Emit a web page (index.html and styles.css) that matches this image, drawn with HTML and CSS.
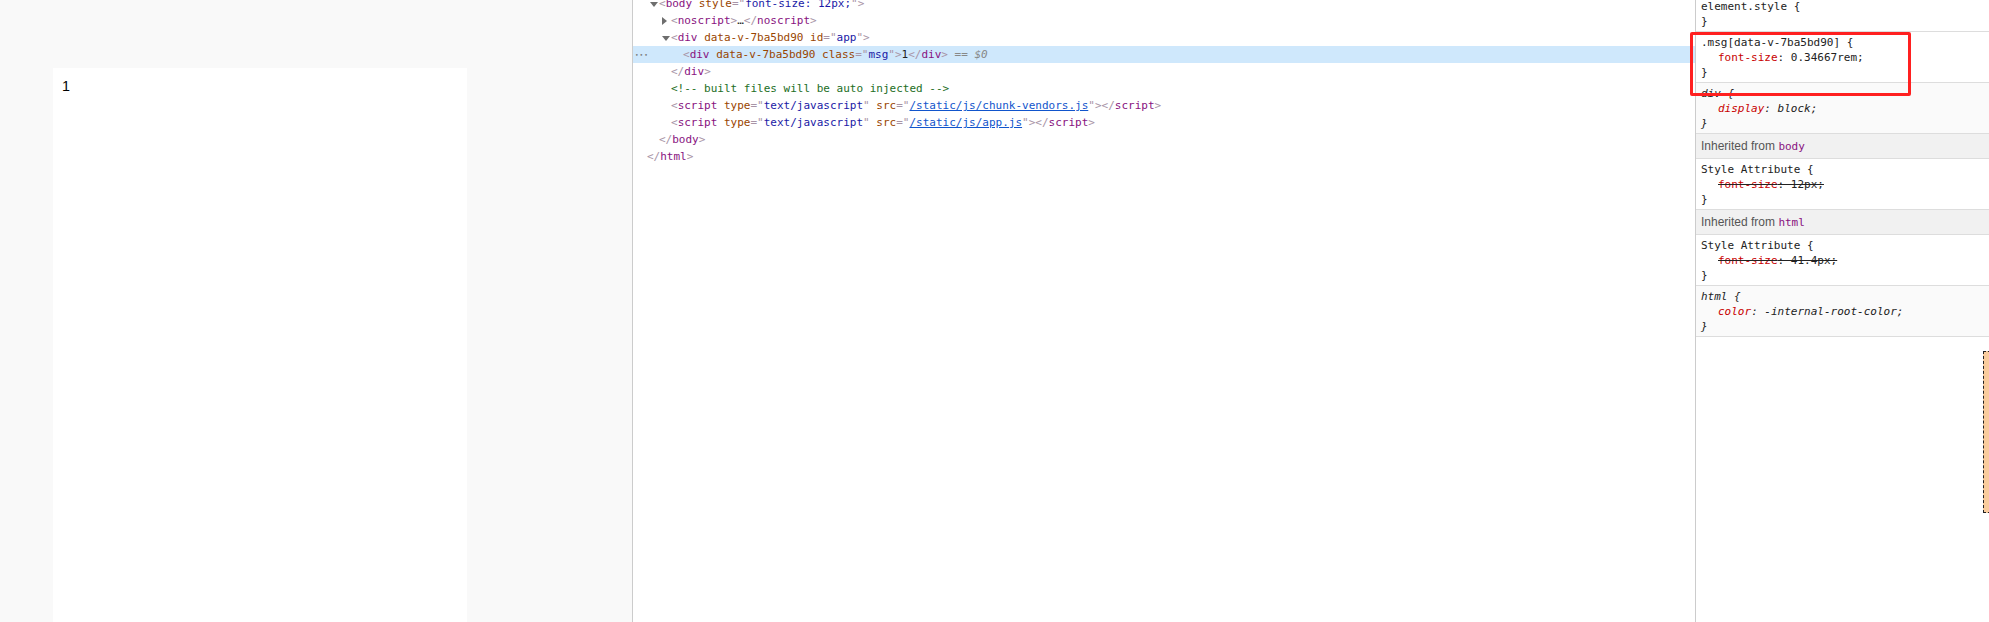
FILE: index.html
```html
<!DOCTYPE html>
<html lang="zh">
<head>
  <meta charset="UTF-8" />
  <title>msg</title>
  <link rel="stylesheet" href="styles.css">
</head>
<body>
  <div class="container">
    <!-- page preview -->
    <div class="preview">
      <div class="msg">1</div>
    </div>

    <!-- elements tree -->
    <div class="elements">
      <div class="tree">
        <div class="row d1"><span class="tri open"></span><span class="br">&lt;</span><span class="tag">body</span> <span class="attr">style</span><span class="br">="</span><span class="val">font-size: 12px;</span><span class="br">"&gt;</span></div>
        <div class="row d2"><span class="tri closed"></span><span class="br">&lt;</span><span class="tag">noscript</span><span class="br">&gt;</span><span class="txt">…</span><span class="br">&lt;/</span><span class="tag">noscript</span><span class="br">&gt;</span></div>
        <div class="row d2"><span class="tri open"></span><span class="br">&lt;</span><span class="tag">div</span> <span class="attr">data-v-7ba5bd90</span> <span class="attr">id</span><span class="br">="</span><span class="val">app</span><span class="br">"&gt;</span></div>
        <div class="row d3 selected"><span class="dots">•••</span><span class="br">&lt;</span><span class="tag">div</span> <span class="attr">data-v-7ba5bd90</span> <span class="attr">class</span><span class="br">="</span><span class="val">msg</span><span class="br">"&gt;</span><span class="txt">1</span><span class="br">&lt;/</span><span class="tag">div</span><span class="br">&gt;</span> <span class="eq">== <i>$0</i></span></div>
        <div class="row d2"><span class="br">&lt;/</span><span class="tag">div</span><span class="br">&gt;</span></div>
        <div class="row d2"><span class="comment">&lt;!-- built files will be auto injected --&gt;</span></div>
        <div class="row d2"><span class="br">&lt;</span><span class="tag">script</span> <span class="attr">type</span><span class="br">="</span><span class="val">text/javascript</span><span class="br">"</span> <span class="attr">src</span><span class="br">="</span><span class="link">/static/js/chunk-vendors.js</span><span class="br">"&gt;&lt;/</span><span class="tag">script</span><span class="br">&gt;</span></div>
        <div class="row d2"><span class="br">&lt;</span><span class="tag">script</span> <span class="attr">type</span><span class="br">="</span><span class="val">text/javascript</span><span class="br">"</span> <span class="attr">src</span><span class="br">="</span><span class="link">/static/js/app.js</span><span class="br">"&gt;&lt;/</span><span class="tag">script</span><span class="br">&gt;</span></div>
        <div class="row d1"><span class="br">&lt;/</span><span class="tag">body</span><span class="br">&gt;</span></div>
        <div class="row d0"><span class="br">&lt;/</span><span class="tag">html</span><span class="br">&gt;</span></div>
      </div>
    </div>

    <!-- styles pane -->
    <div class="styles">
      <div class="styles-inner">
        <div class="section">
          <div>element.style {</div>
          <div>}</div>
        </div>
        <div class="section">
          <div>.msg[data-v-7ba5bd90] {</div>
          <div class="prop"><span class="pname">font-size</span>: 0.34667rem;</div>
          <div>}</div>
        </div>
        <div class="section ua">
          <div>div {</div>
          <div class="prop"><span class="pname">display</span>: block;</div>
          <div>}</div>
        </div>
        <div class="inherited">Inherited from <span class="inh-tag">body</span></div>
        <div class="section">
          <div>Style Attribute {</div>
          <div class="prop"><span class="strike"><span class="pname">font-size</span>: 12px;</span></div>
          <div>}</div>
        </div>
        <div class="inherited">Inherited from <span class="inh-tag">html</span></div>
        <div class="section">
          <div>Style Attribute {</div>
          <div class="prop"><span class="strike"><span class="pname">font-size</span>: 41.4px;</span></div>
          <div>}</div>
        </div>
        <div class="section ua">
          <div>html {</div>
          <div class="prop"><span class="pname">color</span>: -internal-root-color;</div>
          <div>}</div>
        </div>
        <div class="boxmodel">
          <div class="margin-box"></div>
        </div>
      </div>
    </div>

    <!-- red highlight -->
    <div class="mark"></div>
  </div>
</body>
</html>
```

FILE: styles.css
```css
body { margin: 0; font-family: "Liberation Sans", Arial, sans-serif; overflow: hidden; }
.container { display: flex; height: 100vh; position: relative; }

/* preview */
.preview {
  width: 633px;
  box-sizing: border-box;
  background: #f9f9f9;
  border-right: 1px solid #ccc;
  padding: 68px 0 0 53px;
  overflow: hidden;
}
.msg {
  width: 414px;
  height: 100%;
  box-sizing: border-box;
  background: #fff;
  padding: 10px 9px;
  font-size: 14.35px;
  color: #000;
}

/* elements */
.elements {
  flex: 1;
  border-right: 1px solid #ccc;
  overflow: hidden;
  font: 11px "DejaVu Sans Mono", monospace;
  color: #222;
}
.tree { margin-top: -5px; }
.row { height: 17px; line-height: 17px; white-space: nowrap; position: relative; }
.row.d0 { padding-left: 14px; }
.row.d1 { padding-left: 26px; }
.row.d2 { padding-left: 38px; }
.row.d3 { padding-left: 50px; }
.row.selected { background: #cfe8fc; }
.tri { display: inline-block; width: 0; height: 0; margin-left: -9px; vertical-align: middle; }
.tri.open {
  border-left: 4px solid transparent;
  border-right: 4px solid transparent;
  border-top: 5px solid #6e6e6e;
  margin-right: 1px;
}
.tri.closed {
  border-top: 4px solid transparent;
  border-bottom: 4px solid transparent;
  border-left: 5px solid #6e6e6e;
  margin-right: 4px;
}
.dots { position: absolute; left: 2px; top: 0; font-size: 6px; letter-spacing: 1px; color: #777; }
.br { color: #a894a6; }
.tag { color: #881280; }
.attr { color: #994500; }
.val { color: #1a1aa6; }
.txt { color: #222; }
.link { color: #1155cc; text-decoration: underline; }
.comment { color: #236e25; }
.eq { color: #888; }

/* styles */
.styles {
  width: 293px;
  overflow: hidden;
  font: 11px "DejaVu Sans Mono", monospace;
  color: #222;
}
.styles-inner { margin-top: -4px; }
.section {
  padding: 3px 0 2px 5px;
  border-bottom: 1px solid #ddd;
  line-height: 15px;
  white-space: nowrap;
}
.section.ua { background: #fafafa; font-style: italic; }
.prop { padding-left: 17px; }
.pname { color: #c80000; }
.strike { text-decoration: line-through; text-decoration-color: #222; }
.inherited {
  height: 24px;
  padding-left: 5px;
  background: #f1f1f1;
  border-bottom: 1px solid #ddd;
  font: 12px "Liberation Sans", Arial, sans-serif;
  line-height: 24px;
  color: #555;
}
.inh-tag { font: 11px "DejaVu Sans Mono", monospace; color: #881280; }
.boxmodel { padding: 14px 0 0 287px; }
.margin-box {
  width: 60px;
  height: 160px;
  background: #f9cc9d;
  border: 1px dashed #222;
}

/* annotation */
.mark {
  position: absolute;
  left: 1690px;
  top: 32px;
  width: 221px;
  height: 64px;
  box-sizing: border-box;
  border: 3px solid #ff2020;
  border-radius: 2px;
}
```
